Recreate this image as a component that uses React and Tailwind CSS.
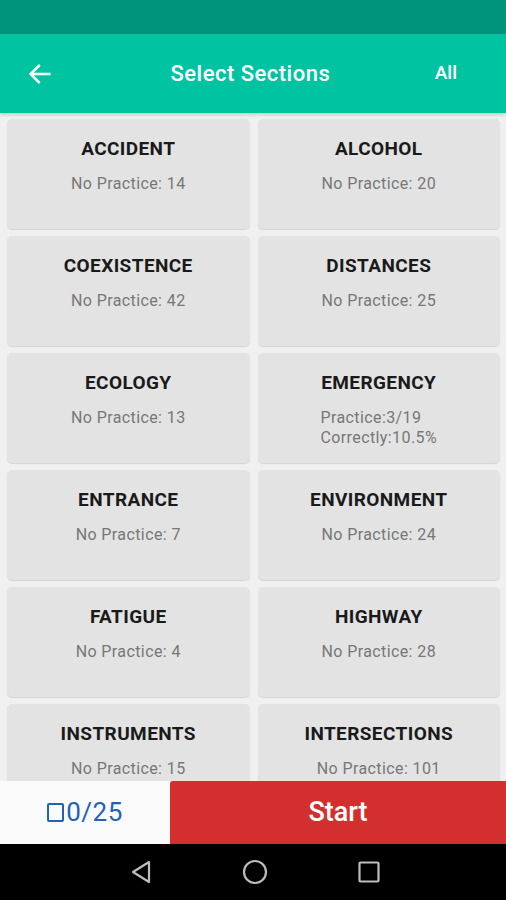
import React from 'react';

const sections = [
  { name: 'ACCIDENT', lines: ['No Practice: 14'] },
  { name: 'ALCOHOL', lines: ['No Practice: 20'] },
  { name: 'COEXISTENCE', lines: ['No Practice: 42'] },
  { name: 'DISTANCES', lines: ['No Practice: 25'] },
  { name: 'ECOLOGY', lines: ['No Practice: 13'] },
  { name: 'EMERGENCY', lines: ['Practice:3/19', 'Correctly:10.5%'] },
  { name: 'ENTRANCE', lines: ['No Practice: 7'] },
  { name: 'ENVIRONMENT', lines: ['No Practice: 24'] },
  { name: 'FATIGUE', lines: ['No Practice: 4'] },
  { name: 'HIGHWAY', lines: ['No Practice: 28'] },
  { name: 'INSTRUMENTS', lines: ['No Practice: 15'] },
  { name: 'INTERSECTIONS', lines: ['No Practice: 101'] },
];

const SectionCard = ({ name, lines }) => (
  <div className="h-[110px] rounded-[5px] bg-[#e3e3e3] shadow-[0_1px_1px_rgba(0,0,0,0.12)] flex flex-col items-center pt-[18px]">
    <div className="text-[19px] leading-6 font-bold tracking-[0.4px] text-[#1a1a1a]">{name}</div>
    <div className="mt-[13px] text-[16px] leading-5 tracking-[0.4px] text-[#777] text-left">
      {lines.map(l => <div key={l}>{l}</div>)}
    </div>
  </div>
);

export default function App() {
  return (
    <div className="w-[506px] h-[900px] flex flex-col bg-[#f0f0f0] overflow-hidden" style={{ fontFamily: 'Roboto, "Liberation Sans", sans-serif' }}>
      <div className="h-[34px] bg-[#00947a]" />
      <div className="h-[79px] bg-[#00c4a1] flex items-center pl-[26px] pr-[49px] text-white shadow-[0_2px_3px_rgba(0,0,0,0.15)] relative z-10">
        <svg width="28" height="28" viewBox="0 0 24 24" fill="none" stroke="white" strokeWidth="2.2" strokeLinecap="square">
          <path d="M20 12H5M11 5l-7 7 7 7" />
        </svg>
        <div className="flex-1 text-center text-[22px] tracking-[0.5px] font-medium pl-[12px]">Select Sections</div>
        <div className="text-[19px] font-medium">All</div>
      </div>
      <div className="flex-1 overflow-hidden pl-[7px] pr-[6px] pt-[6px]">
        <div className="grid grid-cols-2 gap-x-[8px] gap-y-[7px]">
          {sections.map(s => <SectionCard key={s.name} {...s} />)}
        </div>
      </div>
      <div className="h-[63px] flex">
        <div className="w-[170px] bg-[#fafafa] flex items-center justify-center text-[#1e63b8] text-[26px] tracking-[0.5px]">
          <span className="inline-block w-[17px] h-[19px] border-2 border-[#1e63b8] rounded-[2px] mr-[2px]" />
          0/25
        </div>
        <div className="flex-1 bg-[#d32f2f] rounded-tl-[3px] flex items-center justify-center text-white text-[27px] font-medium">Start</div>
      </div>
      <div className="h-[56px] bg-black flex items-center justify-center gap-[90px] pl-[4px]">
        <svg width="22" height="24" viewBox="0 0 22 24" fill="none" stroke="#bdbdbd" strokeWidth="2.2" strokeLinejoin="round">
          <path d="M19 2L3 12l16 10z" />
        </svg>
        <svg width="26" height="26" viewBox="0 0 26 26" fill="none" stroke="#bdbdbd" strokeWidth="2.2">
          <circle cx="13" cy="13" r="11" />
        </svg>
        <svg width="22" height="22" viewBox="0 0 22 22" fill="none" stroke="#bdbdbd" strokeWidth="2.2">
          <rect x="1.5" y="1.5" width="19" height="19" rx="1" />
        </svg>
      </div>
    </div>
  );
}
